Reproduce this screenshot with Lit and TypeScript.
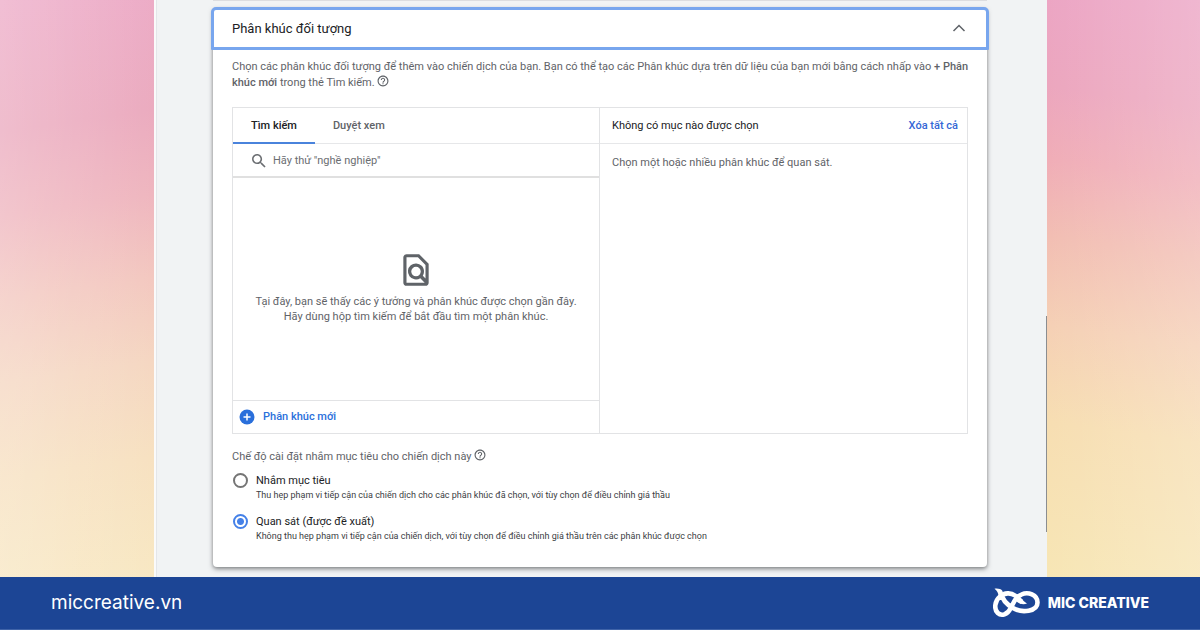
import { LitElement, html, css, svg } from "lit";
import { customElement, property, state } from "lit/decorators.js";

@customElement("help-icon")
class HelpIcon extends LitElement {
  static styles = css`
    :host { display: inline-block; vertical-align: middle; }
    .help { display: block; width: 12px; height: 12px; padding: 0; border: 0; background: none; color: #5f6368; }
    svg { display: block; width: 12px; height: 12px; }
  `;
  render() {
    return html`<button class="help" type="button" aria-label="Trợ giúp">
      <svg viewBox="1 1 22 22" fill="currentColor"><path d="M11 18h2v-2h-2v2zm1-16C6.480 2 2 6.480 2 12s4.480 10 10 10 10-4.480 10-10S17.520 2 12 2zm0 18c-4.410 0-8-3.590-8-8s3.590-8 8-8 8 3.590 8 8-3.590 8-8 8zm0-14c-2.210 0-4 1.790-4 4h2c0-1.100.9-2 2-2s2 .9 2 2c0 2-3 1.750-3 5h2c0-2.250 3-2.500 3-5 0-2.210-1.790-4-4-4z"/></svg>
    </button>`;
  }
}

@customElement("segment-picker")
class SegmentPicker extends LitElement {
  static styles = css`
    :host { display: block; }
    * { box-sizing: border-box; }
    button, input { font: inherit; color: inherit; background: none; border: 0; padding: 0; margin: 0; }
    .picker { display: grid; grid-template-columns: 1fr 1fr; border: 1px solid #e2e3e5; font-size: 11px; line-height: 16px; color: #5f6368; }
    .left { display: flex; flex-direction: column; border-right: 1px solid #e2e3e5; }
    .tabs { display: flex; height: 36px; border-bottom: 1px solid #e6e7e9; }
    .tab { padding: 2px 18px 0; margin-bottom: -1px; font-weight: 500; border-bottom: 2px solid transparent; }
    .tab.active { color: #202124; border-bottom-color: #4a83dc; }
    .search { display: flex; align-items: center; gap: 7px; height: 34px; padding: 2px 20px 0 19px; border-bottom: 2px solid #e0e0e0; }
    .search svg { width: 14px; height: 14px; fill: #6b6e72; flex: none; }
    .search input { flex: 1; min-width: 0; outline: 0; }
    .search input::placeholder { color: #6b6e72; opacity: 1; }
    .empty { display: flex; flex-direction: column; align-items: center; min-height: 222px; padding: 73px 16px 0; text-align: center; line-height: 15px; }
    .empty svg { width: 38px; height: 38px; fill: #5f6368; }
    .empty p { margin: 5px 0 0; }
    .add { display: flex; align-items: center; gap: 8px; height: 33px; padding: 0 6px; border-top: 1px solid #e2e3e5; color: #2a6fdb; font-weight: 500; }
    .add svg { width: 16px; height: 16px; }
    .head { display: flex; justify-content: space-between; align-items: center; height: 36px; padding: 0 9px 0 12px; border-bottom: 1px solid #e6e7e9; color: #202124; }
    .clear { color: #3367d6; font-weight: 500; }
    .hint { margin: 0; padding: 11px 12px; }
  `;
  @state() tab = 0;
  render() {
    return html`<div class="picker">
      <div class="left">
        <div class="tabs" role="tablist">
          ${["Tìm kiếm", "Duyệt xem"].map((t, i) => html`<button type="button" role="tab" aria-selected=${i === this.tab} class="tab ${i === this.tab ? "active" : ""}" @click=${() => (this.tab = i)}>${t}</button>`)}
        </div>
        <div class="search">
          <svg viewBox="3 3 18 18" aria-hidden="true"><path d="M15.500 14h-.790l-.280-.270C15.410 12.590 16 11.110 16 9.500 16 5.910 13.090 3 9.500 3S3 5.910 3 9.500 5.910 16 9.500 16c1.610 0 3.090-.590 4.230-1.570l.270.280v.790l5 4.990L20.490 19l-4.990-5zm-6 0C7.010 14 5 11.990 5 9.500S7.010 5 9.500 5 14 7.010 14 9.500 11.990 14 9.500 14z"/></svg>
          <input type="text" aria-label="Tìm kiếm phân khúc" placeholder='Hãy thử "nghề nghiệp"' />
        </div>
        <div class="empty">
          <svg viewBox="0 0 24 24" aria-hidden="true"><path fill-rule="evenodd" d="M14 2H6c-1.100 0-2 .9-2 2v16c0 1.100.89 2 2 2h12c1.100 0 2-.9 2-2V8l-6-6zM6 4h7.200L18 8.800v8.500l-1.700-1.700c1.250-2 .95-4.600-.7-6.250a5.080 5.080 0 1 0-.9 7.850L17.500 20H6V4zm6 12a3 3 0 1 1 0-6 3 3 0 0 1 0 6z"/></svg>
          <p>Tại đây, bạn sẽ thấy các ý tưởng và phân khúc được chọn gần đây.<br />Hãy dùng hộp tìm kiếm để bắt đầu tìm một phân khúc.</p>
        </div>
        <button type="button" class="add">
          <svg viewBox="0 0 16 16" aria-hidden="true"><circle cx="8" cy="8" r="7.500" fill="#2a6fdb"/><path d="M8 4.500v7M4.500 8h7" stroke="#fff" stroke-width="1.500"/></svg>
          Phân khúc mới
        </button>
      </div>
      <div class="right">
        <div class="head"><span>Không có mục nào được chọn</span><button type="button" class="clear">Xóa tất cả</button></div>
        <p class="hint">Chọn một hoặc nhiều phân khúc để quan sát.</p>
      </div>
    </div>`;
  }
}

@customElement("app-root")
class AppRoot extends LitElement {
  static styles = css`
    :host { display: flex; flex-direction: column; min-height: 100vh; font-family: Roboto, "Noto Sans", sans-serif; font-size: 11px; line-height: 16px; color: #5f6368; }
    * { box-sizing: border-box; }
    .stage { flex: 1; display: grid; grid-template-columns: 154fr 893fr 153fr; }
    .side { min-width: 0; }
    .side.left { background: linear-gradient(to left, transparent, rgba(255, 255, 255, 0.22)), linear-gradient(172deg, #edacc8 0%, #ebabbf 22%, #efb6bf 36%, #f3c8c0 50%, #f5d7c2 64%, #f7e1c1 80%, #f8e8c3 100%); }
    .side.right { background: linear-gradient(to right, transparent, rgba(255, 255, 255, 0.2)), linear-gradient(188deg, #eca5c5 0%, #eca6be 18%, #f0adb7 30%, #f2beb3 43%, #f5d0b5 58%, #f7deb2 74%, #f7e6b5 100%); }
    .screen { display: grid; grid-template-columns: minmax(0, 1fr) 1px; background: #f1f3f4; border-left: 2px solid #fafafa; }
    .inner { display: flex; flex-direction: column; padding: 0 59px 10px 56px; border-left: 1px solid #e4e6e9; }
    .previous { height: 1px; margin-bottom: 7px; background: #dcdde0; }
    .thumb { align-self: end; height: 216px; margin-bottom: 45px; background: #8b8d90; }
    .card { background: #fff; border-radius: 4px; box-shadow: 0 2px 5px rgba(60, 64, 67, 0.55), 0 1px 3px rgba(60, 64, 67, 0.2); }
    .bar { display: flex; justify-content: space-between; align-items: center; width: calc(100% + 4px); height: 43px; margin: -1px -2px 0; padding: 0 20px 0 18px; border: 3px solid #78a6ee; border-radius: 5px 5px 1px 1px; background: #fff; font: inherit; font-size: 13px; color: #202124; text-align: left; }
    .bar svg { width: 14px; height: 14px; fill: none; stroke: #5f6368; stroke-width: 1.500; }
    .body { padding: 9px 19px 23px; }
    .intro { margin: 0 -6px 16px 0; }
    .intro b { font-weight: 500; }
    .intro help-icon { margin: -4px 0 0; }
    .modes { margin: 15px 0 0; }
    .legend { margin-bottom: 8px; }
    .legend help-icon { margin-top: -4px; }
    .option { display: grid; grid-template-columns: 17px 1fr; column-gap: 7px; line-height: 15px; }
    .option + .option { margin-top: 11px; }
    .radio { appearance: none; width: 15px; height: 15px; margin: 0 1px; border: 2px solid #757575; border-radius: 50%; }
    .radio:checked { border-color: #4581e8; background: radial-gradient(circle, #4581e8 3px, #fff 4px); }
    .name { color: #202124; }
    .note { grid-column: 2; font-size: 9px; color: #3c4043; }
    .footer { display: flex; justify-content: space-between; align-items: center; height: 53px; padding: 0 51px; background: #1c4595; color: #fff; border-bottom: 1px solid #3f63a8; }
    .site { color: inherit; text-decoration: none; font: 400 19px/24px Inter, sans-serif; }
    .brand { display: flex; align-items: center; gap: 8px; font: 800 14px/18px Inter, sans-serif; }
    .brand svg { width: 47px; height: 30px; }
  `;
  @property({ attribute: false }) modes = [
    { id: "target", name: "Nhắm mục tiêu", note: "Thu hẹp phạm vi tiếp cận của chiến dịch cho các phân khúc đã chọn, với tùy chọn để điều chỉnh giá thầu" },
    { id: "observe", name: "Quan sát (được đề xuất)", note: "Không thu hẹp phạm vi tiếp cận của chiến dịch, với tùy chọn để điều chỉnh giá thầu trên các phân khúc được chọn" },
  ];
  @state() mode = "observe";
  render() {
    return html`
      <main class="stage">
        <div class="side left"></div>
        <div class="screen">
          <div class="inner">
            <div class="previous"></div>
            <section class="card">
              <button type="button" class="bar" aria-expanded="true">
                Phân khúc đối tượng
                <svg viewBox="0 0 14 14" aria-hidden="true"><path d="M1.500 9 7 3.500 12.500 9"/></svg>
              </button>
              <div class="body">
                <p class="intro">Chọn các phân khúc đối tượng để thêm vào chiến dịch của bạn. Bạn có thể tạo các Phân khúc dựa trên dữ liệu của bạn mới bằng cách nhấp vào <b>+ Phân khúc mới</b> trong thẻ Tìm kiếm. <help-icon></help-icon></p>
                <segment-picker></segment-picker>
                <div class="modes" role="radiogroup" aria-labelledby="modes-label">
                  <div class="legend"><span id="modes-label">Chế độ cài đặt nhắm mục tiêu cho chiến dịch này</span> <help-icon></help-icon></div>
                  ${this.modes.map((m) => html`<div class="option">
                    <input class="radio" type="radio" name="mode" id=${m.id} .checked=${m.id === this.mode} @change=${() => (this.mode = m.id)} />
                    <label class="name" for=${m.id}>${m.name}</label>
                    <span class="note">${m.note}</span>
                  </div>`)}
                </div>
              </div>
            </section>
          </div>
          <div class="thumb"></div>
        </div>
        <div class="side right"></div>
      </main>
      <footer class="footer">
        <a class="site" href="#">miccreative.vn</a>
        <div class="brand">
          <svg viewBox="0 0 47 30" fill="none" stroke="#fff" aria-hidden="true">${svg`
            <path d="M1.500 .7C4.500 .2 8 .8 9.500 3L10 8L5.500 8C5.500 5 4 2.500 1.500 .7Z" fill="#fff" stroke="none"/>
            <path d="M8 5C9 11 14 16.500 20 20C29 25.500 44.500 23.500 44.500 14.500C44.500 6.500 35 3.500 28.500 6.500C21.500 9.500 20.500 15.500 17.500 20.500C14.500 26.500 8.500 28.500 4.800 25C.5 21 2 12.500 7 8.500C11.500 4.500 18 4.500 22 7.500C25 10 26 12 29 14" stroke-width="4.600" stroke-linejoin="round"/>
            <path d="M23 7C27 8 29 12.500 34 15.500C30 17 26 16 22 12Z" fill="#fff" stroke="none"/>`}
          </svg>
          <span>MIC CREATIVE</span>
        </div>
      </footer>`;
  }
}
